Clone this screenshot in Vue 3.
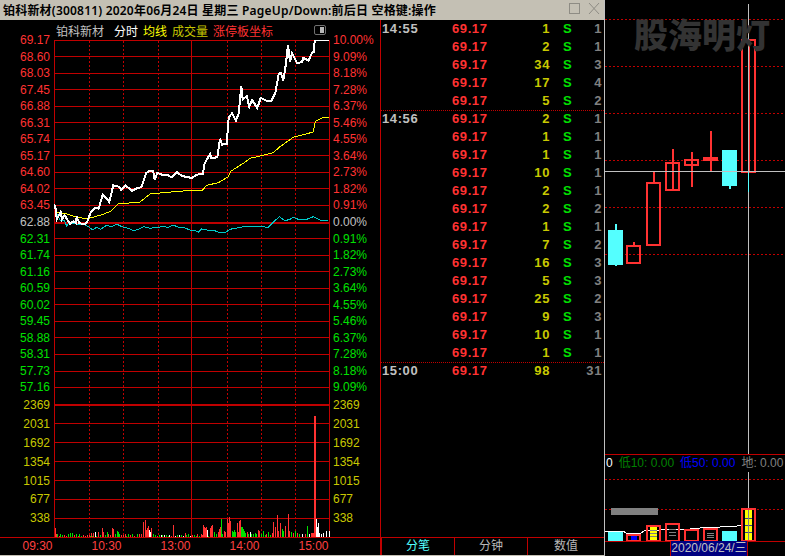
<template>
  <div class="page">
    <div class="window">
      <div class="titlebar">
        <span class="title">铂科新材(300811)  2020年06月24日 星期三 PageUp/Down:前后日 空格键:操作</span>
        <svg class="win-btns" width="34" height="20" viewBox="0 0 34 20">
          <rect x="1.5" y="3.5" width="10" height="10" class="win-stroke" />
          <path d="M21 3 L31 14 M31 3 L21 14" class="win-stroke" />
        </svg>
      </div>
      <div class="body">
        <div class="left">
          <div class="legend">
            <span class="lg-name">铂科新材</span>
            <span class="lg-white">分时</span>
            <span class="lg-yellow">均线</span>
            <span class="lg-olive">成交量</span>
            <span class="lg-red">涨停板坐标</span>
            <span class="lg-toggle"><i></i></span>
          </div>
          <div class="plot">
            <div class="axis axis-l">
              <div v-for="p in prices" :key="p.text" class="price-row" :class="p.cls">{{ p.text }}</div>
              <div v-for="v in volumes" :key="v" class="vol-row">{{ v }}</div>
            </div>
            <svg class="chart" width="276" height="497" viewBox="54 40 276 497" shape-rendering="crispEdges">
              <rect
                v-for="g in gridLines"
                :key="g.y"
                x="54"
                :y="g.y"
                width="276"
                :height="g.h"
                fill="#c00000"
              />
              <line v-for="x in dotCols" :key="x" :x1="x + 0.5" :x2="x + 0.5" y1="41" y2="537" class="dot" />
              <rect x="54" y="40" width="1" height="497" fill="#c00000" />
              <rect x="191" y="40" width="1" height="497" fill="#c00000" />
              <rect x="329" y="40" width="1" height="497" fill="#c00000" />
              <rect
                v-for="b in volBars"
                :key="b.x"
                :x="b.x"
                :y="537 - b.h"
                width="1"
                :height="b.h"
                :fill="b.c"
              />
              <polyline :points="cyanLine" class="ln-cyan" />
              <polyline :points="yellowLine" class="ln-yellow" />
              <polyline :points="whiteLine" class="ln-white" />
            </svg>
            <div class="axis axis-r">
              <div v-for="(p, i) in percents" :key="i" class="price-row" :class="p.cls">{{ p.text }}</div>
              <div v-for="v in volumes" :key="v" class="vol-row">{{ v }}</div>
            </div>
          </div>
          <div class="timeaxis">
            <span v-for="t in times" :key="t">{{ t }}</span>
          </div>
        </div>
        <div class="ticks">
          <div class="rows">
            <div
              v-for="(r, i) in ticks"
              :key="i"
              class="tick"
              :class="{ sep: i === 5 || i === 19 }"
            >
              <span class="t-time">{{ r[0] }}</span>
              <span class="t-price">69.17</span>
              <span class="t-vol">{{ r[1] }}</span>
              <span class="t-side">{{ i === 19 ? "" : "S" }}</span>
              <span class="t-num">{{ r[2] }}</span>
            </div>
          </div>
          <div class="tabs">
            <div class="tab active">分笔</div>
            <div class="tab">分钟</div>
            <div class="tab">数值</div>
          </div>
        </div>
      </div>
    </div>

    <div class="kline">
      <div class="watermark">股海明灯</div>
      <svg width="180" height="454" viewBox="605 0 180 454" shape-rendering="crispEdges">
        <line v-for="y in klineDots" :key="y" x1="605" x2="785" :y1="y + 0.5" :y2="y + 0.5" class="dot" />
        <template v-for="c in candles" :key="c.x">
          <rect :x="c.x + 7" :y="c.hi" width="2" :height="c.lo - c.hi" :fill="c.up ? '#ff3232' : '#54ffff'" />
          <rect v-if="!c.up" :x="c.x" :y="c.top" width="15" :height="c.bot - c.top" fill="#54ffff" />
          <rect v-else :x="c.x + 1" :y="c.top + 1" width="13" :height="c.bot - c.top - 1" class="hollow" />
        </template>
        <rect x="605" y="171" width="180" height="1" fill="#c0c0c0" />
        <rect x="748" y="4" width="1" height="450" fill="#c0c0c0" />
        <rect x="748" y="172" width="1" height="20" fill="#54ffff" />
      </svg>
      <div class="indicators">
        <span class="i-white">0</span>
        <span class="i-green">低10: 0.00</span>
        <span class="i-blue">低50: 0.00</span>
        <span class="i-grey">地: 0.00</span>
      </div>
      <svg width="180" height="84" viewBox="605 472 180 84" shape-rendering="crispEdges">
        <line x1="605" x2="785" y1="479.5" y2="479.5" class="dot" />
        <line x1="605" x2="785" y1="509.5" y2="509.5" class="dot" />
        <rect x="748" y="472" width="1" height="36" fill="#c0c0c0" />
        <rect x="611" y="508" width="47" height="7" fill="#808080" />
        <polyline
          points="605,531 623,531 626,533 641,533 646,530 660,530 665,529 680,529 690,529 700,528 720,527 737,526 741,525"
          class="ln-thin"
        />
        <rect x="608" y="532" width="15" height="9" fill="#54ffff" />
        <rect x="722" y="531" width="15" height="10" fill="#54ffff" />
        <rect x="631" y="535" width="6" height="6" fill="#0000ff" />
        <rect x="650" y="526" width="7" height="15" fill="#ffff00" />
        <rect x="745" y="509" width="7" height="32" fill="#ffff00" />
        <rect v-for="y in stripes" :key="y.k" :x="y.x" :y="y.y" :width="y.w" height="1" :fill="y.c" />
        <rect x="748" y="509" width="1" height="32" fill="#808080" />
        <rect
          v-for="b in lowerBoxes"
          :key="b.x"
          :x="b.x + 1"
          :y="b.y + 1"
          width="13"
          :height="540 - b.y"
          class="hollow"
        />
        <rect x="605" y="541" width="180" height="1" fill="#c00000" />
      </svg>
      <div class="datebox">2020/06/24/三</div>
    </div>
  </div>
</template>

<script setup>
const priceUp = ["69.17", "68.60", "68.03", "67.45", "66.88", "66.31", "65.74", "65.17", "64.60", "64.02", "63.45"];
const priceDown = ["62.31", "61.74", "61.16", "60.59", "60.02", "59.45", "58.88", "58.31", "57.73", "57.16"];
const prices = [
  ...priceUp.map((text) => ({ text, cls: "up" })),
  { text: "62.88", cls: "flat" },
  ...priceDown.map((text) => ({ text, cls: "down" })),
];

const pctUp = ["10.00%", "9.09%", "8.18%", "7.28%", "6.37%", "5.46%", "4.55%", "3.64%", "2.73%", "1.82%", "0.91%"];
const pctDown = ["0.91%", "1.82%", "2.73%", "3.64%", "4.55%", "5.46%", "6.37%", "7.28%", "8.18%", "9.09%"];
const percents = [
  ...pctUp.map((text) => ({ text, cls: "up" })),
  { text: "0.00%", cls: "flat" },
  ...pctDown.map((text) => ({ text, cls: "down" })),
];

const volumes = ["2369", "2031", "1692", "1354", "1015", "677", "338"];
const times = ["09:30", "10:30", "13:00", "14:00", "15:00"];

const gridLines = [];
for (let i = 0; i < 22; i++) {
  gridLines.push({ y: Math.floor(40 + i * 16.55), h: i === 11 ? 2 : 1 });
}
gridLines.push({ y: 404, h: 2 });
for (const y of [423, 442, 461, 480, 499, 518]) gridLines.push({ y, h: 1 });

const dotCols = [89, 123, 158, 227, 261, 295];

// traced from the picture, coordinates are 3x crops with an offset
const trace = (pts, ox, oy) => pts.map(([x, y]) => `${(ox + x / 3).toFixed(1)},${(oy + y / 3).toFixed(1)}`).join(" ");

const whiteLine = trace(
  [
    [12, 522], [18, 540], [20, 568], [32, 546], [36, 568], [44, 556], [50, 566], [60, 582], [70, 574], [78, 580],
    [80, 560], [88, 580], [104, 582], [112, 574], [122, 548], [134, 534], [146, 536], [158, 494], [168, 504],
    [178, 516], [190, 466], [206, 470], [214, 480], [226, 466], [246, 482], [262, 474], [274, 472], [288, 430],
    [300, 422], [310, 424], [314, 450], [322, 428], [340, 436], [352, 434], [364, 442], [380, 426], [396, 438],
    [426, 444], [440, 434], [458, 432], [464, 400], [480, 372], [484, 384], [502, 382], [510, 326], [516, 344],
    [530, 342], [536, 262], [546, 250], [558, 272], [566, 250], [574, 168], [578, 208], [590, 198], [598, 230],
    [606, 210], [622, 234], [632, 204], [650, 212], [664, 212], [676, 190], [686, 132], [692, 128], [700, 152],
    [708, 100], [714, 44], [720, 96], [726, 70], [742, 100], [756, 96], [760, 84], [776, 92], [786, 68], [792, 66],
    [794, 30], [838, 30],
  ],
  50,
  30
);

const yellowLine = trace(
  [
    [12, 522], [18, 545], [50, 552], [80, 562], [112, 566], [150, 556], [180, 545], [205, 522], [270, 516],
    [300, 492], [340, 488], [400, 483], [458, 480], [470, 466], [505, 458], [535, 440], [542, 424], [580, 400],
    [600, 385], [640, 376], [670, 368], [690, 350], [730, 322], [790, 306], [796, 274], [815, 264], [838, 262],
  ],
  50,
  30
);

const cyanLine = [
  trace(
    [
      [14, 62], [20, 70], [30, 90], [42, 90], [50, 108], [56, 100], [70, 100], [80, 102], [90, 102], [104, 104],
      [118, 112], [128, 120], [140, 112], [152, 118], [170, 106], [185, 110], [200, 102], [215, 110], [235, 115],
      [250, 122], [265, 118], [280, 110], [300, 115], [320, 112], [340, 110], [355, 112], [370, 105], [385, 112],
      [400, 112], [420, 120],
    ],
    50,
    190
  ),
  trace(
    [
      [0, 90], [15, 92], [25, 97], [35, 87], [50, 90], [70, 90], [85, 97], [105, 98], [120, 88], [140, 84], [160, 80],
      [190, 80], [215, 80], [235, 82], [248, 68], [268, 50], [285, 62], [300, 58], [310, 52], [330, 60], [350, 58],
      [370, 50], [390, 60], [415, 61],
    ],
    190,
    200
  ),
].join(" ");

const R = "#ff3232";
const G = "#00e000";
const W = "#ffffff";
const volBars = [
  [55, 9, R], [56, 3, R], [57, 3, G], [59, 1, R], [60, 3, G], [62, 2, G], [64, 2, R], [66, 1, R], [68, 3, G], [70, 4, G],
  [72, 4, G], [74, 2, R], [76, 3, G], [78, 1, R], [79, 3, G], [81, 1, G], [83, 2, R], [85, 1, R], [87, 2, R], [89, 2, R],
  [90, 1, G], [91, 4, R], [92, 1, G], [93, 4, R], [95, 5, W], [96, 1, G], [98, 5, R], [100, 2, G], [102, 9, R], [103, 5, R],
  [105, 2, G], [107, 5, G], [108, 3, R], [110, 2, R], [112, 9, R], [113, 8, R], [115, 3, G], [117, 6, G], [118, 5, G],
  [119, 3, G], [121, 2, R], [123, 2, R], [125, 3, R], [126, 1, G], [128, 3, G], [130, 2, R], [132, 3, G], [134, 1, R],
  [137, 3, G], [139, 3, R], [141, 3, R], [143, 15, R], [145, 17, R], [146, 7, R], [147, 9, R], [148, 11, R], [149, 7, W],
  [150, 5, W], [151, 9, R], [153, 3, G], [155, 2, G], [157, 1, R], [159, 2, G], [161, 2, W], [162, 2, G], [164, 2, W],
  [166, 2, G], [168, 1, G], [169, 2, W], [171, 1, R], [173, 12, R], [175, 1, W], [177, 2, G], [179, 2, W], [181, 2, G],
  [183, 1, W], [185, 4, R], [186, 2, G], [188, 3, G], [190, 1, W], [192, 2, R], [194, 2, G], [196, 1, G], [197, 3, R],
  [199, 1, G], [201, 3, R], [202, 2, R], [203, 12, R], [204, 10, R], [205, 9, R], [206, 10, R], [207, 7, W], [208, 1, G],
  [210, 9, R], [211, 11, R], [212, 12, R], [214, 5, G], [216, 3, G], [218, 5, R], [219, 8, R], [220, 10, R], [221, 18, G],
  [222, 3, G], [224, 6, R], [225, 5, R], [227, 18, R], [228, 14, R], [229, 20, R], [230, 16, R], [232, 6, G], [233, 5, G],
  [234, 7, G], [235, 5, G], [237, 14, R], [238, 5, R], [239, 16, R], [240, 17, R], [241, 10, G], [242, 10, G], [243, 8, G],
  [244, 6, G], [245, 4, G], [247, 5, R], [248, 3, G], [250, 5, W], [251, 3, G], [253, 3, G], [255, 4, G], [256, 3, G],
  [258, 7, R], [259, 6, R], [261, 3, G], [263, 6, G], [265, 2, G], [266, 3, R], [268, 5, G], [270, 2, G], [272, 4, R],
  [273, 15, R], [275, 10, R], [277, 22, R], [278, 6, R], [280, 14, R], [282, 8, G], [283, 6, G], [285, 11, R], [288, 23, R],
  [289, 6, R], [291, 5, G], [293, 4, R], [295, 6, G], [297, 4, R], [299, 3, G], [302, 3, W], [305, 3, R], [307, 11, G],
  [309, 3, W], [311, 4, R], [312, 4, R], [313, 4, R], [314, 121, R], [315, 121, R], [316, 18, W], [317, 10, W], [318, 14, W],
  [319, 4, W], [321, 3, W], [323, 4, W], [326, 6, W], [329, 6, W],
].map(([x, h, c]) => ({ x, h, c }));

const ticks = [
  ["14:55", 1, 1], ["", 2, 1], ["", 34, 3], ["", 17, 4], ["", 5, 2],
  ["14:56", 2, 1], ["", 1, 1], ["", 1, 1], ["", 10, 1], ["", 2, 1], ["", 2, 2], ["", 1, 1], ["", 7, 2], ["", 16, 3],
  ["", 5, 3], ["", 25, 2], ["", 9, 3], ["", 10, 1], ["", 1, 1],
  ["15:00", 98, 31],
];

const klineDots = [19, 66, 113, 160, 207, 254];
const candles = [
  { x: 608, top: 230, bot: 265, hi: 224, lo: 266, up: false },
  { x: 626, top: 245, bot: 263, hi: 242, lo: 245, up: true },
  { x: 646, top: 182, bot: 245, hi: 172, lo: 182, up: true },
  { x: 665, top: 162, bot: 190, hi: 149, lo: 191, up: true },
  { x: 684, top: 159, bot: 165, hi: 152, lo: 187, up: true },
  { x: 703, top: 157, bot: 160, hi: 131, lo: 172, up: true },
  { x: 722, top: 150, bot: 186, hi: 150, lo: 189, up: false },
  { x: 741, top: 39, bot: 172, hi: 39, lo: 172, up: true },
];

const lowerBoxes = [
  { x: 626, y: 534 },
  { x: 646, y: 525 },
  { x: 665, y: 523 },
  { x: 684, y: 529 },
  { x: 703, y: 528 },
  { x: 741, y: 508 },
];

const stripes = [
  { k: 1, x: 650, y: 530, w: 7, c: "#808080" },
  { k: 2, x: 650, y: 533, w: 7, c: "#808080" },
  { k: 3, x: 650, y: 536, w: 7, c: "#808080" },
  { k: 4, x: 669, y: 529, w: 7, c: "#808080" },
  { k: 5, x: 669, y: 532, w: 7, c: "#808080" },
  { k: 6, x: 669, y: 535, w: 7, c: "#808080" },
  { k: 7, x: 707, y: 533, w: 7, c: "#808080" },
  { k: 8, x: 707, y: 535, w: 7, c: "#808080" },
  { k: 9, x: 707, y: 537, w: 7, c: "#808080" },
  { k: 10, x: 745, y: 518, w: 7, c: "#404080" },
  { k: 11, x: 745, y: 525, w: 7, c: "#404080" },
  { k: 12, x: 745, y: 532, w: 7, c: "#404080" },
];
</script>

<style>
html,
body {
  margin: 0;
  background: #000;
}
</style>

<style scoped>
.page {
  display: flex;
  width: 785px;
  height: 556px;
  background: #000;
  overflow: hidden;
  font-family: "Liberation Sans", "Noto Sans CJK SC", sans-serif;
  font-size: 12px;
}

.window {
  width: 604px;
  display: flex;
  flex-direction: column;
  flex-shrink: 0;
  border-bottom: 1px solid #c4c0b4;
  box-sizing: border-box;
}

.titlebar {
  height: 20px;
  flex-shrink: 0;
  background: #c4c0b4;
  display: flex;
  align-items: center;
  justify-content: space-between;
  color: #000;
}

.title {
  padding-left: 3px;
  white-space: pre;
  font-family: "Noto Sans", "Noto Sans CJK SC", sans-serif;
  font-weight: 600;
  font-size: 12px;
  letter-spacing: 0.2px;
}

.win-btns {
  margin-right: 2px;
}

.win-stroke {
  fill: none;
  stroke: #8e8c84;
  stroke-width: 1;
}

.body {
  flex: 1;
  display: flex;
  min-height: 0;
}

.left {
  width: 381px;
  flex-shrink: 0;
  display: flex;
  flex-direction: column;
  border-right: 1px solid #c00000;
  box-sizing: border-box;
}

.legend {
  height: 20px;
  flex-shrink: 0;
  display: flex;
  align-items: center;
  gap: 5px;
  padding-left: 56px;
}

.lg-name {
  color: #c0c0c0;
  margin-right: 5px;
}

.lg-white {
  color: #fff;
}

.lg-yellow {
  color: #ffff00;
}

.lg-olive {
  color: #c8c800;
}

.lg-red {
  color: #ff3232;
}

.lg-toggle {
  margin-left: auto;
  margin-right: 54px;
  width: 12px;
  height: 10px;
  box-sizing: border-box;
  border: 1px solid #707070;
  border-radius: 2px;
  display: flex;
  justify-content: flex-end;
}

.lg-toggle i {
  display: block;
  width: 4px;
  margin: 1px;
  background: #b8b8b8;
}

.plot {
  height: 497px;
  flex-shrink: 0;
  display: flex;
}

.axis {
  margin-top: -8px;
  flex-shrink: 0;
}

.axis-l {
  width: 54px;
  text-align: right;
  padding-right: 4px;
  box-sizing: border-box;
}

.axis-r {
  width: 50px;
  padding-left: 3px;
  box-sizing: border-box;
}

.price-row {
  height: 16.55px;
  line-height: 16.55px;
}

.vol-row {
  height: 18.9px;
  line-height: 18.9px;
  color: #c8c800;
}

.up {
  color: #ff3232;
}

.flat {
  color: #c0c0c0;
}

.down {
  color: #00e000;
}

.chart {
  flex-shrink: 0;
  display: block;
}

.dot {
  stroke: #c00000;
  stroke-width: 1;
  stroke-dasharray: 2 2;
  shape-rendering: crispEdges;
}

.ln-white {
  fill: none;
  stroke: #fff;
  stroke-width: 2;
}

.ln-yellow {
  fill: none;
  stroke: #ffff00;
  stroke-width: 1;
}

.ln-cyan {
  fill: none;
  stroke: #00c8c8;
  stroke-width: 1;
}

.ln-thin {
  fill: none;
  stroke: #fff;
  stroke-width: 1;
}

.timeaxis {
  flex: 1;
  border-top: 1px solid #c00000;
  display: flex;
  padding-left: 3px;
  color: #ff4040;
  line-height: 17px;
}

.timeaxis span {
  width: 69px;
  text-align: center;
}

.ticks {
  flex: 1;
  display: flex;
  flex-direction: column;
  min-width: 0;
}

.rows {
  flex: 1;
  font-family: "Liberation Sans", sans-serif;
  font-weight: 700;
  font-size: 13px;
  letter-spacing: 0.6px;
}

.tick {
  height: 18px;
  line-height: 18px;
  box-sizing: border-box;
  display: grid;
  grid-template-columns: 70px 70px 28px 21px 31px;
  padding-left: 1px;
}

.tick.sep {
  border-top: 1px dotted #c00000;
  line-height: 16px;
}

.t-time {
  color: #c0c0c0;
}

.t-price {
  color: #ff3232;
}

.t-vol {
  color: #c8c800;
  text-align: right;
}

.t-side {
  color: #00e000;
  padding-left: 13px;
}

.t-num {
  color: #808080;
  text-align: right;
}

.tabs {
  height: 18px;
  flex-shrink: 0;
  display: flex;
  border-top: 1px solid #c00000;
  box-sizing: border-box;
}

.tab {
  width: 73px;
  text-align: center;
  color: #b8b8b8;
  line-height: 17px;
  border-left: 1px solid #c00000;
  box-sizing: border-box;
}

.tab:last-child {
  flex: 1;
}

.tab.active {
  color: #54ffff;
}

.kline {
  position: relative;
  flex: 1;
  border-left: 1px solid #c0c0c0;
  display: flex;
  flex-direction: column;
}

.kline svg {
  display: block;
  flex-shrink: 0;
}

.hollow {
  fill: none;
  stroke: #ff3232;
  stroke-width: 2;
}

.watermark {
  position: absolute;
  left: 29px;
  top: 13px;
  font-family: "Noto Sans CJK SC", sans-serif;
  font-weight: 900;
  font-size: 34px;
  line-height: 42px;
  color: #333;
  white-space: nowrap;
}

.indicators {
  height: 18px;
  flex-shrink: 0;
  border-top: 1px solid #c00000;
  box-sizing: border-box;
  display: flex;
  gap: 6px;
  line-height: 17px;
  padding-left: 1px;
  white-space: nowrap;
}

.i-white {
  color: #fff;
}

.i-green {
  color: #008000;
}

.i-blue {
  color: #0000ff;
}

.i-grey {
  color: #808080;
}

.datebox {
  position: absolute;
  left: 65px;
  bottom: 0;
  width: 78px;
  height: 15px;
  line-height: 15px;
  background: #000080;
  color: #c0c0c0;
  text-align: center;
  border-left: 1px solid #c00000;
  border-right: 1px solid #c00000;
  box-sizing: border-box;
  white-space: nowrap;
}
</style>
